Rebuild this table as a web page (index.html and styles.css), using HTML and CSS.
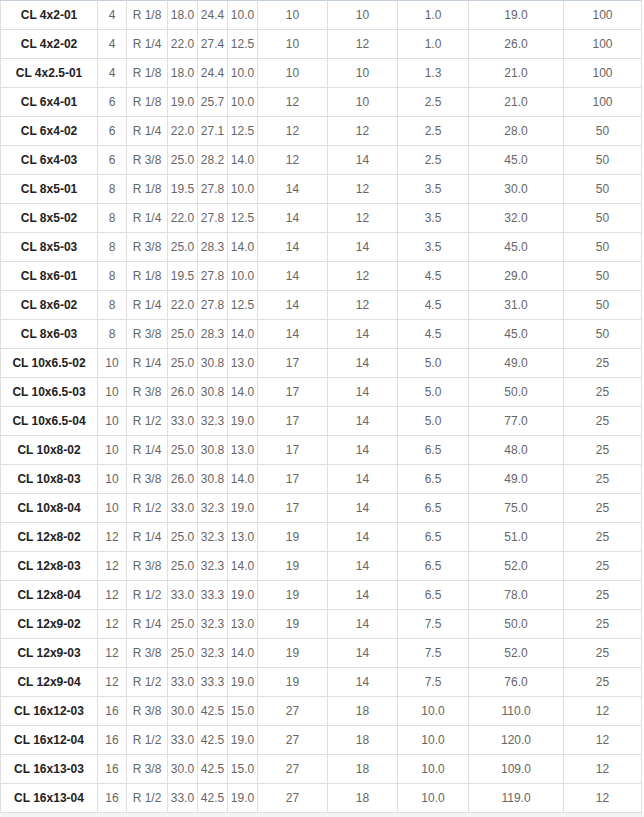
FILE: index.html
```html
<!DOCTYPE html>
<html lang="ko">
<head>
<meta charset="utf-8">
<title>CL</title>
<link rel="stylesheet" href="styles.css">
</head>
<body>
<div class="wrap">
<table class="spec">
<colgroup>
<col class="c1"><col class="c2"><col class="c3"><col class="c4"><col class="c5"><col class="c6"><col class="c7"><col class="c8"><col class="c9"><col class="c10"><col class="c11">
</colgroup>
<tbody>
<tr><th>CL 4x2-01</th><td>4</td><td>R 1/8</td><td>18.0</td><td>24.4</td><td>10.0</td><td>10</td><td>10</td><td>1.0</td><td>19.0</td><td>100</td></tr>
<tr><th>CL 4x2-02</th><td>4</td><td>R 1/4</td><td>22.0</td><td>27.4</td><td>12.5</td><td>10</td><td>12</td><td>1.0</td><td>26.0</td><td>100</td></tr>
<tr><th>CL 4x2.5-01</th><td>4</td><td>R 1/8</td><td>18.0</td><td>24.4</td><td>10.0</td><td>10</td><td>10</td><td>1.3</td><td>21.0</td><td>100</td></tr>
<tr><th>CL 6x4-01</th><td>6</td><td>R 1/8</td><td>19.0</td><td>25.7</td><td>10.0</td><td>12</td><td>10</td><td>2.5</td><td>21.0</td><td>100</td></tr>
<tr><th>CL 6x4-02</th><td>6</td><td>R 1/4</td><td>22.0</td><td>27.1</td><td>12.5</td><td>12</td><td>12</td><td>2.5</td><td>28.0</td><td>50</td></tr>
<tr><th>CL 6x4-03</th><td>6</td><td>R 3/8</td><td>25.0</td><td>28.2</td><td>14.0</td><td>12</td><td>14</td><td>2.5</td><td>45.0</td><td>50</td></tr>
<tr><th>CL 8x5-01</th><td>8</td><td>R 1/8</td><td>19.5</td><td>27.8</td><td>10.0</td><td>14</td><td>12</td><td>3.5</td><td>30.0</td><td>50</td></tr>
<tr><th>CL 8x5-02</th><td>8</td><td>R 1/4</td><td>22.0</td><td>27.8</td><td>12.5</td><td>14</td><td>12</td><td>3.5</td><td>32.0</td><td>50</td></tr>
<tr><th>CL 8x5-03</th><td>8</td><td>R 3/8</td><td>25.0</td><td>28.3</td><td>14.0</td><td>14</td><td>14</td><td>3.5</td><td>45.0</td><td>50</td></tr>
<tr><th>CL 8x6-01</th><td>8</td><td>R 1/8</td><td>19.5</td><td>27.8</td><td>10.0</td><td>14</td><td>12</td><td>4.5</td><td>29.0</td><td>50</td></tr>
<tr><th>CL 8x6-02</th><td>8</td><td>R 1/4</td><td>22.0</td><td>27.8</td><td>12.5</td><td>14</td><td>12</td><td>4.5</td><td>31.0</td><td>50</td></tr>
<tr><th>CL 8x6-03</th><td>8</td><td>R 3/8</td><td>25.0</td><td>28.3</td><td>14.0</td><td>14</td><td>14</td><td>4.5</td><td>45.0</td><td>50</td></tr>
<tr><th>CL 10x6.5-02</th><td>10</td><td>R 1/4</td><td>25.0</td><td>30.8</td><td>13.0</td><td>17</td><td>14</td><td>5.0</td><td>49.0</td><td>25</td></tr>
<tr><th>CL 10x6.5-03</th><td>10</td><td>R 3/8</td><td>26.0</td><td>30.8</td><td>14.0</td><td>17</td><td>14</td><td>5.0</td><td>50.0</td><td>25</td></tr>
<tr><th>CL 10x6.5-04</th><td>10</td><td>R 1/2</td><td>33.0</td><td>32.3</td><td>19.0</td><td>17</td><td>14</td><td>5.0</td><td>77.0</td><td>25</td></tr>
<tr><th>CL 10x8-02</th><td>10</td><td>R 1/4</td><td>25.0</td><td>30.8</td><td>13.0</td><td>17</td><td>14</td><td>6.5</td><td>48.0</td><td>25</td></tr>
<tr><th>CL 10x8-03</th><td>10</td><td>R 3/8</td><td>26.0</td><td>30.8</td><td>14.0</td><td>17</td><td>14</td><td>6.5</td><td>49.0</td><td>25</td></tr>
<tr><th>CL 10x8-04</th><td>10</td><td>R 1/2</td><td>33.0</td><td>32.3</td><td>19.0</td><td>17</td><td>14</td><td>6.5</td><td>75.0</td><td>25</td></tr>
<tr><th>CL 12x8-02</th><td>12</td><td>R 1/4</td><td>25.0</td><td>32.3</td><td>13.0</td><td>19</td><td>14</td><td>6.5</td><td>51.0</td><td>25</td></tr>
<tr><th>CL 12x8-03</th><td>12</td><td>R 3/8</td><td>25.0</td><td>32.3</td><td>14.0</td><td>19</td><td>14</td><td>6.5</td><td>52.0</td><td>25</td></tr>
<tr><th>CL 12x8-04</th><td>12</td><td>R 1/2</td><td>33.0</td><td>33.3</td><td>19.0</td><td>19</td><td>14</td><td>6.5</td><td>78.0</td><td>25</td></tr>
<tr><th>CL 12x9-02</th><td>12</td><td>R 1/4</td><td>25.0</td><td>32.3</td><td>13.0</td><td>19</td><td>14</td><td>7.5</td><td>50.0</td><td>25</td></tr>
<tr><th>CL 12x9-03</th><td>12</td><td>R 3/8</td><td>25.0</td><td>32.3</td><td>14.0</td><td>19</td><td>14</td><td>7.5</td><td>52.0</td><td>25</td></tr>
<tr><th>CL 12x9-04</th><td>12</td><td>R 1/2</td><td>33.0</td><td>33.3</td><td>19.0</td><td>19</td><td>14</td><td>7.5</td><td>76.0</td><td>25</td></tr>
<tr><th>CL 16x12-03</th><td>16</td><td>R 3/8</td><td>30.0</td><td>42.5</td><td>15.0</td><td>27</td><td>18</td><td>10.0</td><td>110.0</td><td>12</td></tr>
<tr><th>CL 16x12-04</th><td>16</td><td>R 1/2</td><td>33.0</td><td>42.5</td><td>19.0</td><td>27</td><td>18</td><td>10.0</td><td>120.0</td><td>12</td></tr>
<tr><th>CL 16x13-03</th><td>16</td><td>R 3/8</td><td>30.0</td><td>42.5</td><td>15.0</td><td>27</td><td>18</td><td>10.0</td><td>109.0</td><td>12</td></tr>
<tr><th>CL 16x13-04</th><td>16</td><td>R 1/2</td><td>33.0</td><td>42.5</td><td>19.0</td><td>27</td><td>18</td><td>10.0</td><td>119.0</td><td>12</td></tr>
</tbody>
</table>
<div class="foot"></div>
</div>
</body>
</html>
```

FILE: styles.css
```css
html, body {
  margin: 0;
  padding: 0;
  background: #ffffff;
}
.wrap {
  width: 644px;
}
.spec {
  border-collapse: collapse;
  table-layout: fixed;
  width: 642px;
  border-top: 1px solid #c6d1dc;
  font-family: "Liberation Sans", Arial, "Noto Sans CJK KR", sans-serif;
  font-size: 12px;
  color: #666666;
}
.c1 { width: 97px; }
.c2 { width: 29px; }
.c3 { width: 41px; }
.c4 { width: 30px; }
.c5 { width: 30px; }
.c6 { width: 30px; }
.c7 { width: 70px; }
.c8 { width: 70px; }
.c9 { width: 71px; }
.c10 { width: 95px; }
.c11 { width: 78px; }
.spec th,
.spec td {
  height: 28px;
  padding: 0;
  border: 1px solid #e2dede;
  text-align: center;
  vertical-align: middle;
  white-space: nowrap;
  overflow: hidden;
}
.spec tr:first-child th,
.spec tr:first-child td {
  border-top: 1px solid #c6d1dc;
}
.spec th {
  font-weight: bold;
  color: #222222;
}
.foot {
  height: 6px;
  background: #f3f3f3;
}
```
